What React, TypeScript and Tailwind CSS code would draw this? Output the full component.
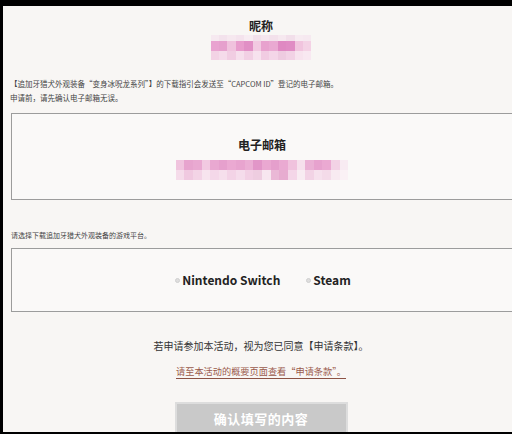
import React from "react";

const nickTop = ["bg-[#f6e9f0]","bg-[#f3e2ec]","bg-[#f6e8ef]","bg-[#f4e3ed]","bg-[#f7ecf2]","bg-[#f2e0ea]","bg-[#f5e6ee]","bg-[#f3e1eb]","bg-[#f6e8ef]","bg-[#f2dfea]","bg-[#f7ebf1]","bg-[#f6e9f0]"];
const nickMid = ["bg-[#e9a3d0]","bg-[#e6a0cd]","bg-[#f0c2dd]","bg-[#e89ccc]","bg-[#e18fc5]","bg-[#f2c9e1]","bg-[#e8a2ce]","bg-[#eaa9d2]","bg-[#df89c2]","bg-[#e08cc4]","bg-[#f1c4de]","bg-[#f4d2e5]"];
const nickBot = ["bg-[#f3d3e5]","bg-[#f5dbea]","bg-[#f1cde2]","bg-[#f6dfec]","bg-[#f2d0e4]","bg-[#f7e2ee]","bg-[#f1cce2]","bg-[#f4d6e8]","bg-[#eecbe0]","bg-[#f2d2e5]","bg-[#f7e3ee]","bg-[#f8e8f1]"];

const mailTop = ["bg-[#f0c4de]","bg-[#e7a4ce]","bg-[#e9a9d1]","bg-[#f2c9e1]","bg-[#e9a8d1]","bg-[#e6a0cd]","bg-[#eba9d2]","bg-[#e8a4cf]","bg-[#ebaed4]","bg-[#e296c8]","bg-[#eaa8d1]","bg-[#e59fcc]","bg-[#eaaad2]","bg-[#f0c2dd]","bg-[#f6e0ec]","bg-[#eab0d4]","bg-[#e7a2ce]","bg-[#eba9d2]","bg-[#f3d2e5]","bg-[#f8ebf2]"];
const mailBot = ["bg-[#f5dcea]","bg-[#f0c9e0]","bg-[#f3d4e6]","bg-[#f7e4ee]","bg-[#f4d8e9]","bg-[#f6dfec]","bg-[#f3d3e6]","bg-[#f5dceb]","bg-[#f2d0e4]","bg-[#eecde0]","bg-[#f7e6ef]","bg-[#eab8d6]","bg-[#e7acd0]","bg-[#f4d6e8]","bg-[#f8ecf2]","bg-[#f2d3e5]","bg-[#f6e1ed]","bg-[#f4dbe9]","bg-[#f8eaf1]","bg-[#faf1f5]"];

function Blur({ rows, cell }: { rows: string[][]; cell: string }) {
  return (
    <div className="flex flex-col items-center">
      {rows.map((row, i) => (
        <div key={i} className="flex">
          {row.map((c, j) => (
            <div key={j} className={`${c} ${cell}`} />
          ))}
        </div>
      ))}
    </div>
  );
}

function Radio({ label }: { label: string }) {
  return (
    <div className="flex items-center gap-[2px]">
      <div className="w-[5px] h-[5px] rounded-full bg-[#dedede] border border-[#cfcfcf]" />
      <span className="text-[12px] font-bold text-[#222] leading-[16px]">{label}</span>
    </div>
  );
}

export default function App() {
  return (
    <div className="w-[512px] h-[434px] bg-black overflow-hidden flex flex-col font-['Noto_Sans_CJK_SC',sans-serif]">
      <div className="h-[6px] shrink-0" />
      <div className="flex-1 ml-[3px] mb-[2px] bg-[#f8f6f4] overflow-hidden">
        <div className="w-[504px] ml-[8px] flex flex-col text-[#333]">
          <div className="w-[500px] mt-[12px] h-[16px] leading-[16px] text-[12px] font-bold text-center text-[#222]">昵称</div>
          <div className="w-[500px] mt-[1px]">
            <Blur
              cell="w-[8.4px]"
              rows={[
                nickTop.map((c) => c + " h-[6px]"),
                nickMid.map((c) => c + " h-[10px]"),
                nickBot.map((c) => c + " h-[9px]"),
              ]}
            />
          </div>
          <div className="mt-[17px] text-[7.5px] leading-[14px] text-[#444] -ml-[1px]">
            <div>【追加牙猎犬外观装备“变身冰呪龙系列”】的下载指引会发送至“CAPCOM ID”登记的电子邮箱。</div>
            <div>申请前，请先确认电子邮箱无误。</div>
          </div>
          <div className="mt-[8px] h-[87px] box-border border border-[#9c9c9c] bg-[#faf9f8] pt-[23px]">
            <div className="w-[500px] h-[16px] leading-[16px] text-[12px] font-bold text-center text-[#222]">电子邮箱</div>
            <div className="w-[500px] mt-[7px]">
              <Blur
                cell="w-[8.65px]"
                rows={[
                  mailTop.map((c) => c + " h-[10px]"),
                  mailBot.map((c) => c + " h-[10px]"),
                ]}
              />
            </div>
          </div>
          <div className="mt-[28px] text-[7px] leading-[14px] text-[#444]">请选择下载追加牙猎犬外观装备的游戏平台。</div>
          <div className="mt-[6px] h-[64px] box-border border border-[#9c9c9c] bg-[#faf9f8] flex items-center">
            <div className="w-[500px] flex justify-center gap-[26px] pl-[2px]">
              <Radio label="Nintendo Switch" />
              <Radio label="Steam" />
            </div>
          </div>
          <div className="w-[500px] mt-[26px] h-[16px] leading-[16px] text-[10px] text-center text-[#333]">若申请参加本活动，视为您已同意【申请条款】。</div>
          <div className="w-[500px] mt-[10px] flex justify-center">
            <span className="inline-block h-[15px] leading-[14px] text-[9.2px] text-[#9a5a4c] border-b border-[#8c5244]">请至本活动的概要页面查看“申请条款”。</span>
          </div>
          <div className="w-[500px] mt-[23px] flex justify-center">
            <div className="w-[173px] h-[40px] bg-[#c9c9c9] border-2 border-[#dddddd] flex items-start justify-center pt-[6px]">
              <span className="text-[13px] leading-[18px] font-bold text-white tracking-[0.5px]">确认填写的内容</span>
            </div>
          </div>
        </div>
      </div>
    </div>
  );
}
